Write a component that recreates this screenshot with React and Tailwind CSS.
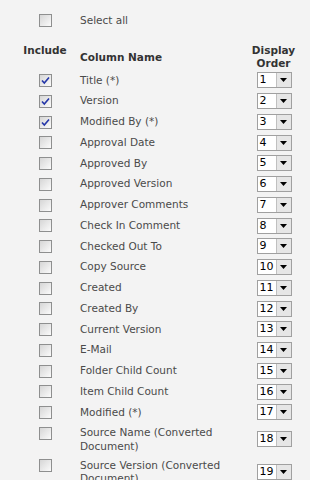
const columns = [
  { name: "Title (*)", checked: true },
  { name: "Version", checked: true },
  { name: "Modified By (*)", checked: true },
  { name: "Approval Date" },
  { name: "Approved By" },
  { name: "Approved Version" },
  { name: "Approver Comments" },
  { name: "Check In Comment" },
  { name: "Checked Out To" },
  { name: "Copy Source" },
  { name: "Created" },
  { name: "Created By" },
  { name: "Current Version" },
  { name: "E-Mail" },
  { name: "Folder Child Count" },
  { name: "Item Child Count" },
  { name: "Modified (*)" },
  { name: "Source Name (Converted Document)" },
  { name: "Source Version (Converted Document)" },
];

function Checkbox({ checked }) {
  return (
    <div className="w-[13px] h-[13px] border border-[#8e8f8f] bg-gradient-to-br from-[#d6d6d6] to-[#fbfbfb] flex items-center justify-center">
      {checked && (
        <svg width="9" height="9" viewBox="0 0 9 9">
          <path d="M1 4.5 L3.3 7 L8 1.5" fill="none" stroke="#2436a8" strokeWidth="1.6" />
        </svg>
      )}
    </div>
  );
}

function OrderSelect({ value }) {
  return (
    <div className="flex w-[35px] h-[16px] border border-[#a0a0a0] bg-white">
      <div className="flex-1 text-[11px] leading-[14px] pl-[2px] text-black">{value}</div>
      <div className="w-[15px] border-l border-[#c0c0c0] bg-[#e6e6e6] flex items-center justify-center">
        <svg width="7" height="4" viewBox="0 0 7 4">
          <path d="M0 0 H7 L3.5 4 Z" fill="#000" />
        </svg>
      </div>
    </div>
  );
}

export default function App() {
  return (
    <div className="w-[310px] h-[480px] bg-[#f3f3f3] overflow-hidden text-[10.5px] text-[#4a4a4a]" style={{ fontFamily: "'DejaVu Sans', Verdana, sans-serif" }}>
      <div className="pl-[10px] pt-[10px]">
        {/* Select all */}
        <div className="grid grid-cols-[70px_165px_57px] h-[21px] items-center">
          <div className="flex justify-center"><Checkbox /></div>
          <div>Select all</div>
        </div>

        {/* Header */}
        <div className="grid grid-cols-[70px_165px_57px] mt-[13px] font-bold text-[#333] leading-[13px]">
          <div className="text-center">Include</div>
          <div className="self-center pt-[1px]">Column Name</div>
          <div className="text-center">Display<br />Order</div>
        </div>

        {/* Rows */}
        {columns.map((col, i) => (
          <div key={i} className="grid grid-cols-[70px_165px_57px] min-h-[20.75px] py-[2px] leading-[13.5px]">
            <div className="flex justify-center pt-[2px]"><Checkbox checked={col.checked} /></div>
            <div className="pr-[6px] pt-[1.5px]">{col.name}</div>
            <div className="flex justify-center self-center pl-[1px]"><OrderSelect value={i + 1} /></div>
          </div>
        ))}
      </div>
    </div>
  );
}
